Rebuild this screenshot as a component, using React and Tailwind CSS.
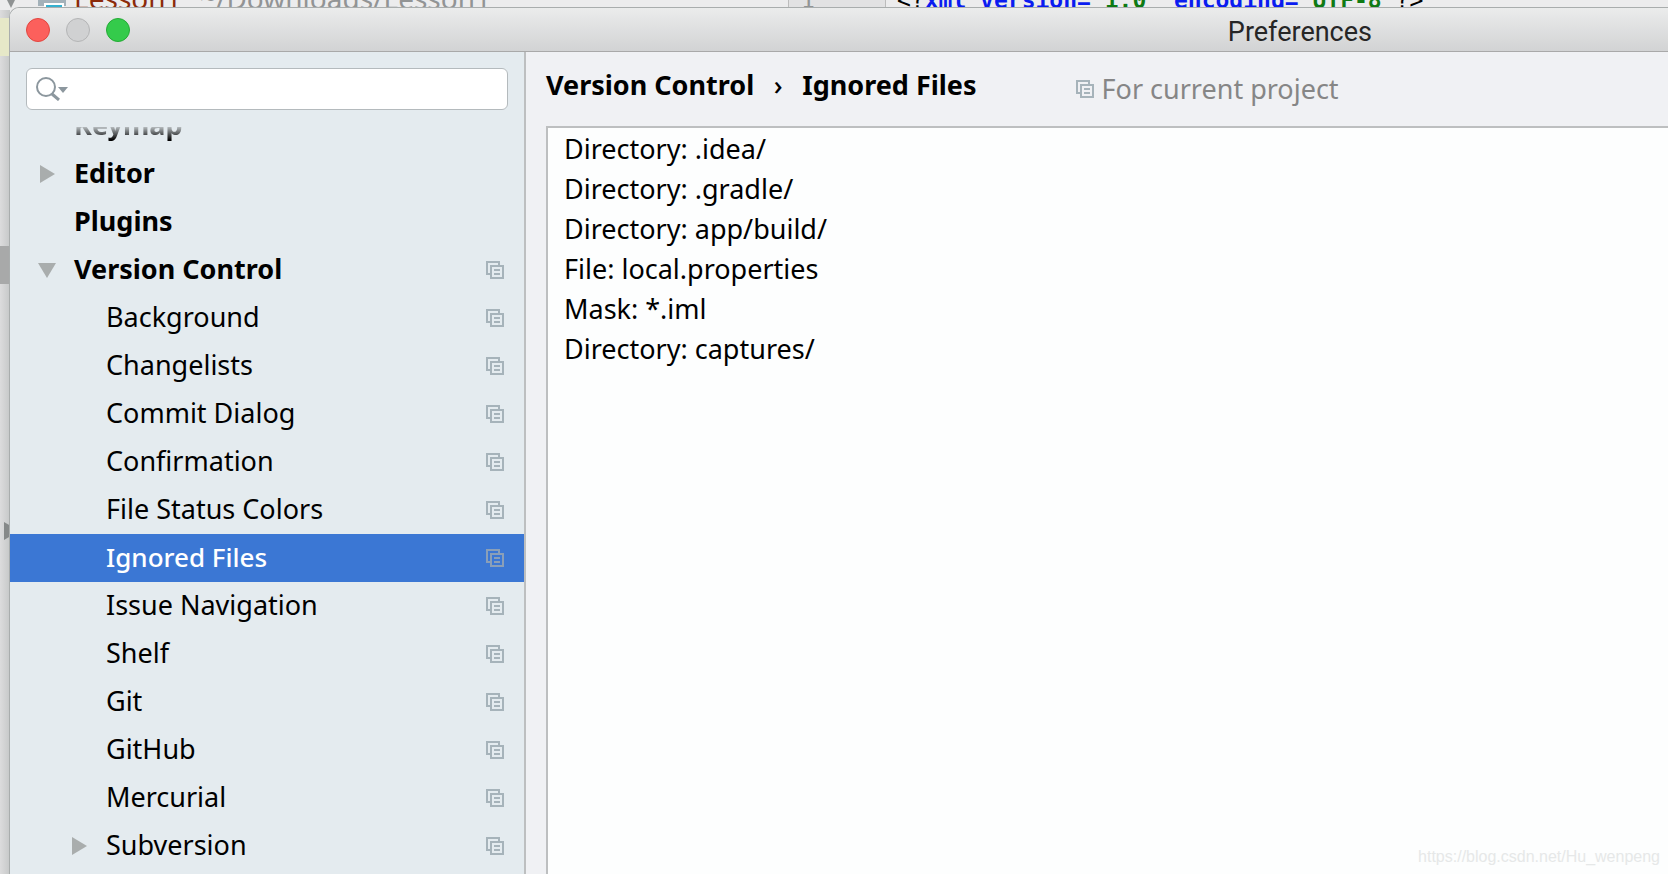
import { useState } from 'react';

const TREE = [
  { label: 'Editor', level: 0, arrow: 'right' },
  { label: 'Plugins', level: 0 },
  { label: 'Version Control', level: 0, arrow: 'down', project: true },
  { label: 'Background', level: 1, project: true },
  { label: 'Changelists', level: 1, project: true },
  { label: 'Commit Dialog', level: 1, project: true },
  { label: 'Confirmation', level: 1, project: true },
  { label: 'File Status Colors', level: 1, project: true },
  { label: 'Ignored Files', level: 1, project: true },
  { label: 'Issue Navigation', level: 1, project: true },
  { label: 'Shelf', level: 1, project: true },
  { label: 'Git', level: 1, project: true },
  { label: 'GitHub', level: 1, project: true },
  { label: 'Mercurial', level: 1, project: true },
  { label: 'Subversion', level: 1, arrow: 'right', project: true },
];

const IGNORED = [
  'Directory: .idea/',
  'Directory: .gradle/',
  'Directory: app/build/',
  'File: local.properties',
  'Mask: *.iml',
  'Directory: captures/',
];

function ProjectIcon({ color = '#a6b3ba' }) {
  return (
    <svg className="h-[18px] w-[18px] shrink-0" viewBox="0 0 18 18" fill="none" stroke={color} strokeWidth="2">
      <path d="M13 4V1H1v12h3" />
      <path d="M5 5h12v12H5z" />
      <path d="M8 9h6M8 13h6" />
    </svg>
  );
}

function Arrow({ direction }) {
  return (
    <svg className="h-[18px] w-[18px]" viewBox="0 0 18 18" fill="#a9adad">
      {direction === 'right' && <path d="M2 0l15 9-15 9z" />}
      {direction === 'down' && <path d="M0 2h18L9 17z" />}
    </svg>
  );
}

function TreeRow({ item, selected, onSelect }) {
  return (
    <li>
      <button
        type="button"
        onClick={onSelect}
        className={`flex h-12 w-full items-center pr-[20px] text-left ${
          item.level === 0 ? 'pl-[28px] font-bold' : 'pl-[60px]'
        } ${selected ? 'bg-[#3b77d4] text-[26px] font-medium text-white' : 'text-black'}`}
      >
        <span className="w-[36px]">
          <Arrow direction={item.arrow} />
        </span>
        <span className="flex-1 pb-[2px]">{item.label}</span>
        {item.project && <ProjectIcon color={selected ? '#8a9fb8' : undefined} />}
      </button>
    </li>
  );
}

// The IDE window that is partly visible behind the dialog
function EditorBehind() {
  return (
    <div className="h-full bg-[#ececed]">
      <div className="flex h-[10px] items-end leading-[24px] whitespace-nowrap">
        <svg className="ml-[4px] h-[10px] w-[14px]" viewBox="0 0 14 10" fill="#8f9293">
          <path d="M0 -6h14L7 8z" />
        </svg>
        <svg className="ml-[20px] h-[10px] w-[28px]" viewBox="0 0 28 10">
          <path d="M0 0h28v6H0z" fill="#a3b1b9" />
          <path d="M6 3h20v7H6z" fill="#fff" />
          <path d="M8 5h16v3H8z" fill="#35b0cf" />
        </svg>
        <span className="ml-[8px] w-[126px] text-[28px] text-[#8b2a0a]">Lesson1</span>
        <span className="w-[588px] text-[28px] text-[#929495]">~/Downloads/Lesson1</span>
        <div className="flex h-[10px] w-[98px] items-end border-x border-[#bcbcbc] bg-[#e2e2e3] pl-[12px] font-['DejaVu_Sans_Mono',monospace] text-[23px] leading-[20px] text-[#929495]">
          1
        </div>
        <span className="pl-[11px] font-['DejaVu_Sans_Mono',monospace] text-[23px] leading-[20px] font-bold text-[#0f7a14]">
          <span className="font-normal text-black">&lt;?</span>
          <span className="text-[#0a1cf0]">xml version=</span>"1.0"
          <span className="text-[#0a1cf0]"> encoding=</span>"UTF-8"
          <span className="font-normal text-black">?&gt;</span>
        </span>
      </div>
      <div className="h-full w-[10px] bg-linear-to-r from-[#dcdcdd] to-[#c6c8c8] pt-[8px]">
        <div className="h-[38px] bg-[#e6e8c8]" />
        <div className="mt-[190px] h-[38px] bg-[#a8a9a9]" />
        <svg className="mt-[238px] ml-[4px] h-[18px] w-[6px]" viewBox="0 0 6 18" fill="#868989">
          <path d="M0 0l15 9-15 9z" />
        </svg>
      </div>
    </div>
  );
}

export default function App() {
  const [selected, setSelected] = useState('Ignored Files');
  const [query, setQuery] = useState('');

  return (
    <div className="relative h-screen overflow-hidden font-['Noto_Sans',sans-serif] text-[27px] leading-[40px]">
      <EditorBehind />

      <div className="absolute inset-0 top-[7px] left-[9px] flex flex-col overflow-hidden rounded-tl-[10px] border-t border-l border-[#a9adad] bg-[#f0f1f4]">
        {/* Title bar */}
        <header className="flex h-[44px] shrink-0 items-center justify-between border-b border-[#a9a9a9] bg-linear-to-b from-[#ebecec] to-[#d2d3d4] pr-[296px] pl-[16px]">
          <div className="flex gap-[16px]">
            <button type="button" aria-label="Close" className="h-6 w-6 rounded-full border border-[#e2463f] bg-[#fc605c]" />
            <button type="button" aria-label="Minimize" className="h-6 w-6 rounded-full border border-[#b4b5b6] bg-[#d0d1d2]" />
            <button type="button" aria-label="Zoom" className="h-6 w-6 rounded-full border border-[#24ab35] bg-[#34cb4b]" />
          </div>
          <h1 className="pt-[4px] font-[Roboto,sans-serif] text-[#262626]">Preferences</h1>
        </header>

        <div className="flex min-h-0 flex-1">
          {/* Settings tree */}
          <aside className="flex w-[516px] shrink-0 flex-col border-r-2 border-[#bdbfc0] bg-[#e4ebef]">
            <label className="mx-[16px] mt-[16px] flex h-[42px] shrink-0 items-center rounded-[6px] border border-[#b4babd] bg-white pl-[9px]">
              <svg className="h-[24px] w-[32px]" viewBox="0 0 32 24" fill="none">
                <circle cx="10" cy="10" r="9" stroke="#8c979e" strokeWidth="2" />
                <path d="M16 17l7 6" stroke="#8c979e" strokeWidth="3" />
                <path d="M22 10h10l-5 6z" fill="#8c979e" />
              </svg>
              <input
                type="text"
                aria-label="Search settings"
                value={query}
                onChange={(e) => setQuery(e.target.value)}
                className="min-w-0 flex-1 bg-transparent px-2 outline-none"
              />
            </label>
            {/* Scrolled row fades out under the search box */}
            <div className="mt-[17px] flex h-[23px] shrink-0 items-end overflow-hidden pl-[64px] leading-[50px] font-bold [mask-image:linear-gradient(to_bottom,#0003,#000_13px)]">
              Keymap
            </div>
            <ul className="min-h-0 flex-1 overflow-hidden">
              {TREE.map((item) => (
                <TreeRow
                  key={item.label}
                  item={item}
                  selected={selected === item.label}
                  onSelect={() => setSelected(item.label)}
                />
              ))}
            </ul>
          </aside>

          {/* Settings page */}
          <main className="flex min-w-0 flex-1 flex-col pl-[20px]">
            <div className="flex h-[74px] shrink-0 items-center">
              <h2 className="flex pb-[8px] font-bold">
                <span>Version Control</span>
                <span className="w-[48px] text-center font-medium">›</span>
                <span>Ignored Files</span>
              </h2>
              <div className="ml-[99px] flex items-center gap-[8px] text-[#868686]">
                <ProjectIcon />
                <span>For current project</span>
              </div>
            </div>
            <div className="flex flex-1 flex-col justify-between border-t-2 border-l-2 border-[#bdbfc0] bg-[#fdfefe]">
              <ul className="pt-px pl-[16px] text-black">
                {IGNORED.map((entry) => (
                  <li key={entry}>{entry}</li>
                ))}
              </ul>
              <p className="self-end pr-[8px] pb-[7px] font-['Liberation_Sans',sans-serif] text-[16px] leading-[20px] text-[#e6e8e8]">
                https://blog.csdn.net/Hu_wenpeng
              </p>
            </div>
          </main>
        </div>
      </div>
    </div>
  );
}
